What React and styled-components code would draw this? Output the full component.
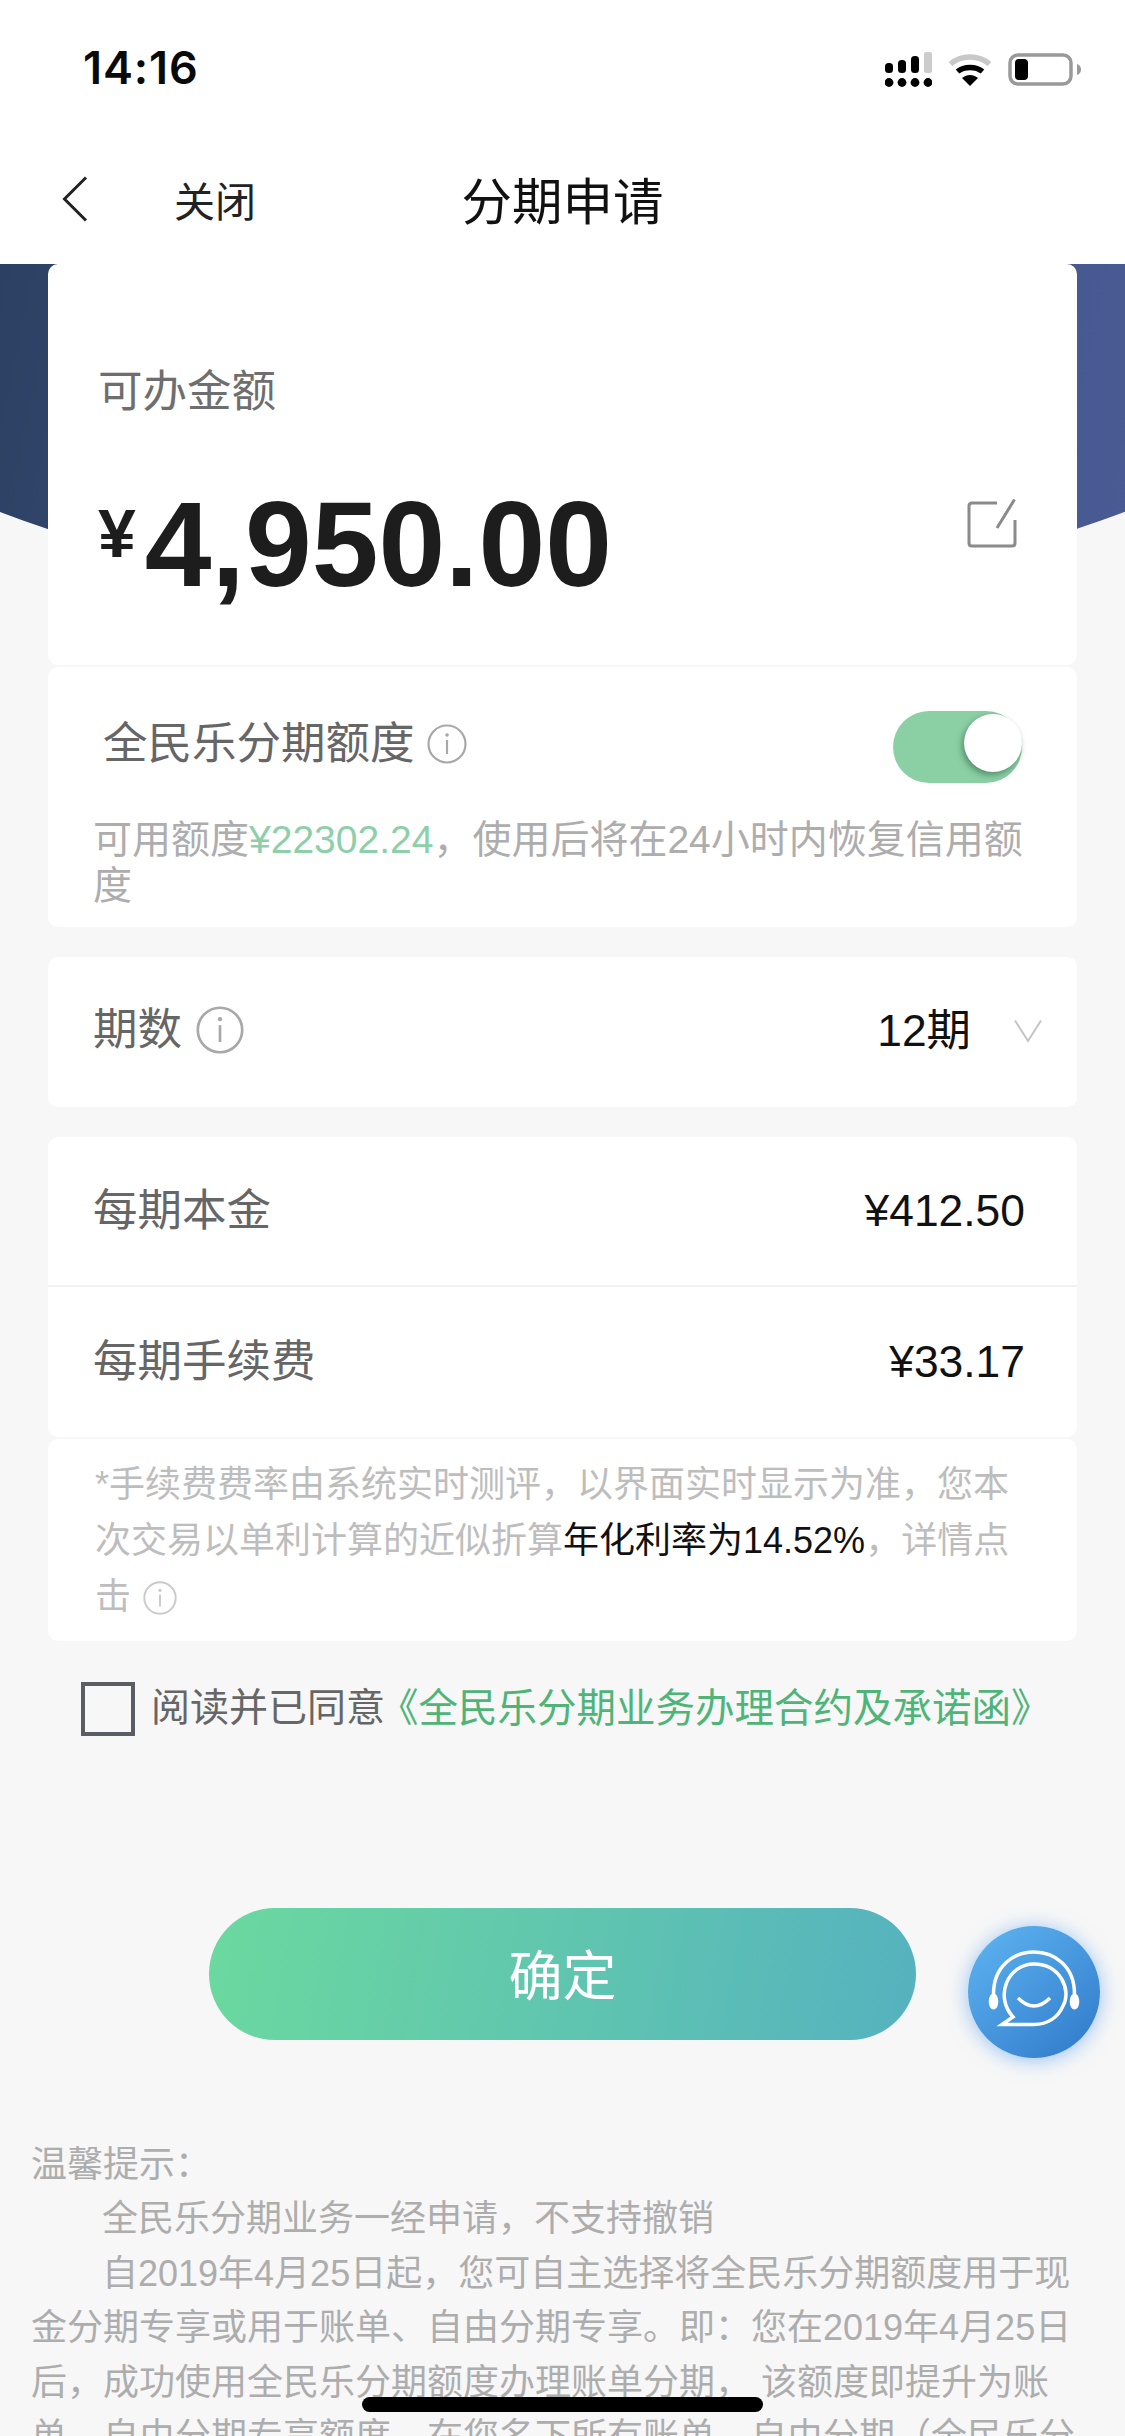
import React from "react";
import styled, { createGlobalStyle } from "styled-components";

const FONT = `"Liberation Sans", "Noto Sans CJK SC", sans-serif`;

const Global = createGlobalStyle`
  html, body { margin: 0; padding: 0; background: #f7f7f7; }
  body { font-family: ${FONT}; }
  * { box-sizing: border-box; }
`;

const Page = styled.div`
  position: relative;
  width: 1125px;
  height: 2436px;
  overflow: hidden;
  background: #f7f7f7;
`;
const StatusBar = styled.div`
  height: 100px;
  background: #fff;
  display: flex;
  align-items: flex-start;
  justify-content: space-between;
  padding: 44px 43px 0 83px;
`;
const Time = styled.div`
  font-family: Inter, "Liberation Sans", sans-serif;
  font-size: 45px;
  line-height: 48px;
  font-weight: 600;
  letter-spacing: 0.9px;
  color: #0a0a0a;
`;
const StatusIcons = styled.div`
  display: flex;
  align-items: center;
  gap: 16px;
  margin-top: 8px;
`;
const NavBar = styled.div`
  position: relative;
  height: 164px;
  background: #fff;
  display: flex;
  align-items: center;
  padding: 34px 0 0 62px;
`;
const CloseText = styled.span`
  font-size: 41px;
  line-height: 60px;
  color: #222;
  margin: 8px 0 0 86px;
`;
const Title = styled.span`
  position: absolute;
  left: 0;
  right: 0;
  top: 32px;
  bottom: 0;
  display: flex;
  align-items: center;
  justify-content: center;
  font-size: 50.5px;
  color: #111;
`;
const Main = styled.div`
  position: relative;
  padding: 0 48px;
`;
const HeaderBg = styled.div`
  position: absolute;
  left: 0;
  top: 0;
  width: 1125px;
  height: 350px;
  background: linear-gradient(102deg, #2b4063 0%, #3d4f78 30%, #4a5a94 100%);
  clip-path: circle(1600px at 562px -1250px);
`;
const Card = styled.section`
  position: relative;
  background: #fff;
  border-radius: 10px;
  margin-top: ${(p) => p.$mt || 0}px;
`;
const AmountCard = styled(Card)`
  height: 401px;
  padding: 98px 60px 0 50px;
`;
const AmountLabel = styled.div`
  font-size: 44.5px;
  line-height: 60px;
  color: #6e6e6e;
`;
const AmountRow = styled.div`
  display: flex;
  align-items: center;
  justify-content: space-between;
  margin-top: 51px;
  height: 130px;
`;
const Amount = styled.div`
  font-size: 120px;
  line-height: 130px;
  font-weight: 700;
  color: #1d1d1d;
  white-space: nowrap;
`;
const Yen = styled.span`
  font-size: 68px;
  vertical-align: 29px;
  margin-right: 9px;
`;
const EditSlot = styled.span`
  display: block;
  line-height: 0;
  margin-bottom: 30px;
`;
const QuotaCard = styled(Card)`
  height: 260px;
  margin-top: 2px;
  padding: 44px 55px 0 45px;
`;
const QuotaTop = styled.div`
  display: flex;
  align-items: center;
  justify-content: space-between;
  height: 72px;
  padding-left: 10px;
`;
const LabelGroup = styled.div`
  display: flex;
  align-items: center;
  gap: ${(p) => p.$gap || 12}px;
  margin-bottom: ${(p) => p.$lift || 0}px;
`;
const Label = styled.span`
  font-size: 44.5px;
  line-height: 60px;
  color: #666;
`;
const Toggle = styled.div`
  position: relative;
  width: 129px;
  height: 72px;
  border-radius: 36px;
  background: #8bcfa5;
`;
const Knob = styled.span`
  position: absolute;
  right: 0;
  top: 3px;
  width: 58px;
  height: 58px;
  border-radius: 50%;
  background: #fff;
  box-shadow: -2px 3px 6px rgba(40, 90, 60, 0.55);
`;
const QuotaNote = styled.div`
  font-size: 39px;
  line-height: 46px;
  color: #adadad;
  margin-top: 34px;
  word-break: break-all;
  width: 935px;
`;
const GreenNum = styled.span`
  color: #8ccfa8;
`;
const Row = styled.div`
  display: flex;
  align-items: center;
  justify-content: space-between;
  height: 150px;
  padding: 0 52px 0 45px;
  border-bottom: ${(p) => (p.$line ? "2px solid #f1f1f1" : "none")};
`;
const Value = styled.span`
  font-size: 44.4px;
  line-height: 60px;
  color: #111;
`;
const ValueGroup = styled.div`
  display: flex;
  align-items: center;
  gap: 43px;
  margin: 0 -17px 2px 0;
`;
const FeeNote = styled(Card)`
  height: 202px;
  margin-top: 2px;
  padding: 18px 60px 0 47px;
  font-size: 36px;
  line-height: 56px;
  color: #bdbdbd;
  word-break: break-all;
`;
const Dark = styled.span`
  color: #111;
`;
const InlineInfo = styled.span`
  display: inline-block;
  vertical-align: -6px;
  margin-left: 12px;
  line-height: 0;
`;
const Agree = styled.div`
  display: flex;
  align-items: center;
  margin: 41px 0 0 33px;
  height: 54px;
  white-space: nowrap;
`;
const CheckBox = styled.span`
  display: block;
  width: 54px;
  height: 54px;
  border: 4px solid #5a5d63;
  margin-right: 16px;
  flex: none;
`;
const AgreeText = styled.span`
  font-size: 39px;
  color: #666;
  margin-bottom: 10px;
`;
const AgreeLink = styled.span`
  font-size: 39.5px;
  color: #4fb477;
  margin: 0 0 10px -6px;
`;
const ButtonRow = styled.div`
  display: flex;
  justify-content: center;
  margin-top: 172px;
`;
const Confirm = styled.div`
  width: 707px;
  height: 132px;
  border-radius: 66px;
  background: linear-gradient(100deg, #6bd99f 0%, #55b2bf 100%);
  color: #fff;
  font-size: 54px;
  padding-bottom: 4px;
  display: flex;
  align-items: center;
  justify-content: center;
`;
const Fab = styled.div`
  position: absolute;
  left: 968px;
  top: 1926px;
  width: 132px;
  height: 132px;
  border-radius: 50%;
  background: linear-gradient(140deg, #5fb6f2 0%, #2f78c9 100%);
  box-shadow: 0 2px 20px rgba(70, 150, 240, 0.55);
`;
const Tips = styled.div`
  margin: 98px 0 0 31px;
  width: 1045px;
  font-size: 36px;
  line-height: 54.4px;
  color: #adadad;
  word-break: break-all;
`;
const TipPara = styled.div`
  text-indent: ${(p) => (p.$indent ? 71 : 0)}px;
`;
const HomeBar = styled.div`
  position: absolute;
  left: 362px;
  top: 2397px;
  width: 401px;
  height: 15px;
  border-radius: 8px;
  background: #000;
`;

const Info = ({ size = 40, color = "#a8a8a8", sw = 2.2 }) => (
  <svg width={size} height={size} viewBox="0 0 40 40" fill="none">
    <circle cx="20" cy="20" r="18.5" stroke={color} strokeWidth={sw} />
    <circle cx="20" cy="11" r="1.8" fill={color} />
    <line x1="20" y1="16" x2="20" y2="30" stroke={color} strokeWidth={sw} />
  </svg>
);

const Signal = () => (
  <svg width="47" height="35" viewBox="0 0 47 35">
    <rect x="0" y="11" width="8" height="10" rx="3.5" fill="#000" />
    <rect x="13" y="8" width="8" height="13" rx="3.5" fill="#000" />
    <rect x="26" y="4" width="8" height="17" rx="3.5" fill="#000" />
    <rect x="39" y="0" width="8" height="21" rx="2" fill="#ccc" />
    <circle cx="4" cy="30.5" r="4.4" fill="#000" />
    <circle cx="17" cy="30.5" r="4.4" fill="#000" />
    <circle cx="30" cy="30.5" r="4.4" fill="#000" />
    <circle cx="43" cy="30.5" r="4.4" fill="#000" />
  </svg>
);
const Wifi = () => (
  <svg width="44" height="33" viewBox="0 0 44 33" fill="none">
    <path d="M2.5 11 C13 1.5 31 1.5 41.5 11" stroke="#c8c8c8" strokeWidth="5.5" />
    <path d="M9.5 18.5 C16 13 28 13 34.5 18.5" stroke="#000" strokeWidth="5.5" />
    <path d="M14 25 L22 33 L30 25 C25 21 19 21 14 25 Z" fill="#000" />
  </svg>
);
const Battery = () => (
  <svg width="74" height="33" viewBox="0 0 74 33">
    <rect x="2" y="2" width="61" height="29" rx="8" fill="none" stroke="#999" strokeWidth="3.5" />
    <rect x="7" y="6" width="13" height="21" rx="4" fill="#000" />
    <path d="M69 11 C72 12 73 14 73 16.5 C73 19 72 21 69 22 Z" fill="#999" />
  </svg>
);
const Back = () => (
  <svg width="26" height="46" viewBox="0 0 26 46" fill="none">
    <path d="M24 1.5 L2.5 23 L24 44.5" stroke="#222" strokeWidth="3" />
  </svg>
);
const Edit = () => (
  <svg width="50" height="50" viewBox="0 0 50 50" fill="none">
    <path
      d="M30 5 H5 Q2 5 2 8 V45 Q2 48 5 48 H45 Q48 48 48 45 V22"
      stroke="#8a8a8a"
      strokeWidth="3"
    />
    <path d="M47.5 1.5 L30 30" stroke="#8a8a8a" strokeWidth="3" />
  </svg>
);
const Chevron = () => (
  <svg width="28" height="24" viewBox="0 0 28 24" fill="none">
    <path d="M1 1.5 L14 22 L27 1.5" stroke="#c4c4c4" strokeWidth="2" />
  </svg>
);
const Agent = () => (
  <svg width="132" height="132" viewBox="0 0 132 132" fill="none">
    <path d="M25.5 68 C25.5 12 106.5 12 106.5 68" stroke="#fff" strokeWidth="3.5" />
    <ellipse cx="25.5" cy="75.5" rx="4.8" ry="8" fill="#fff" />
    <ellipse cx="106.5" cy="75.5" rx="4.8" ry="8" fill="#fff" />
    <path
      d="M34 98.5 L45 91 C26 70 40 38 66 38 C92 38 104 64 95 80 C90 91 80 98.5 66 98.5 Z"
      stroke="#fff"
      strokeWidth="3.5"
      strokeLinejoin="miter"
    />
    <path d="M50 72 Q66 88 82 72" stroke="#fff" strokeWidth="3.5" />
  </svg>
);

export default function App() {
  return (
    <Page>
      <Global />
      <StatusBar>
        <Time>14:16</Time>
        <StatusIcons>
          <Signal />
          <Wifi />
          <Battery />
        </StatusIcons>
      </StatusBar>
      <NavBar>
        <Back />
        <CloseText>关闭</CloseText>
        <Title>分期申请</Title>
      </NavBar>
      <Main>
        <HeaderBg />
        <AmountCard>
          <AmountLabel>可办金额</AmountLabel>
          <AmountRow>
            <Amount>
              <Yen>¥</Yen>4,950.00
            </Amount>
            <EditSlot>
              <Edit />
            </EditSlot>
          </AmountRow>
        </AmountCard>
        <QuotaCard>
          <QuotaTop>
            <LabelGroup $lift={6}>
              <Label>全民乐分期额度</Label>
              <Info />
            </LabelGroup>
            <Toggle>
              <Knob />
            </Toggle>
          </QuotaTop>
          <QuotaNote>
            可用额度<GreenNum>¥22302.24</GreenNum>，使用后将在24小时内恢复信用额度
          </QuotaNote>
        </QuotaCard>
        <Card $mt={30}>
          <Row>
            <LabelGroup $gap={14} $lift={4}>
              <Label>期数</Label>
              <Info size={48} />
            </LabelGroup>
            <ValueGroup>
              <Value>12期</Value>
              <Chevron />
            </ValueGroup>
          </Row>
        </Card>
        <Card $mt={30}>
          <Row $line>
            <Label>每期本金</Label>
            <Value>¥412.50</Value>
          </Row>
          <Row>
            <Label>每期手续费</Label>
            <Value>¥33.17</Value>
          </Row>
        </Card>
        <FeeNote>
          *手续费费率由系统实时测评，以界面实时显示为准，您本次交易以单利计算的近似折算
          <Dark>年化利率为14.52%</Dark>，详情点击
          <InlineInfo>
            <Info size={34} color="#c9c9c9" />
          </InlineInfo>
        </FeeNote>
        <Agree>
          <CheckBox />
          <AgreeText>阅读并已同意</AgreeText>
          <AgreeLink>《全民乐分期业务办理合约及承诺函》</AgreeLink>
        </Agree>
        <ButtonRow>
          <Confirm>确定</Confirm>
        </ButtonRow>
      </Main>
      <Tips>
        <div>温馨提示：</div>
        <TipPara $indent>全民乐分期业务一经申请，不支持撤销</TipPara>
        <TipPara $indent>
          自2019年4月25日起，您可自主选择将全民乐分期额度用于现金分期专享或用于账单、自由分期专享。即：您在2019年4月25日后，成功使用全民乐分期额度办理账单分期， 该额度即提升为账单、自由分期专享额度，在您名下所有账单、自由分期（全民乐分期专享额度）
        </TipPara>
      </Tips>
      <Fab>
        <Agent />
      </Fab>
      <HomeBar />
    </Page>
  );
}
